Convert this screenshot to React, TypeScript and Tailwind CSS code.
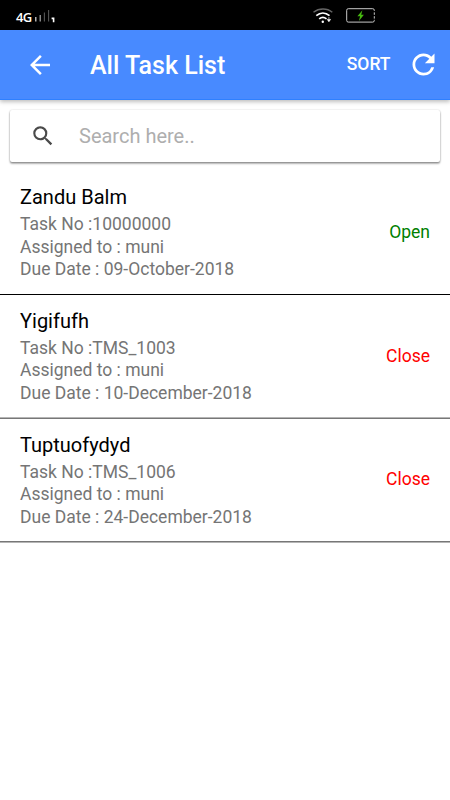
import { MdArrowBack, MdRefresh, MdSearch } from "react-icons/md";

type Task = {
  name: string;
  taskNo: string;
  assignedTo: string;
  dueDate: string;
  status: "Open" | "Close";
};

const tasks: Task[] = [
  { name: "Zandu Balm", taskNo: "10000000", assignedTo: "muni", dueDate: "09-October-2018", status: "Open" },
  { name: "Yigifufh", taskNo: "TMS_1003", assignedTo: "muni", dueDate: "10-December-2018", status: "Close" },
  { name: "Tuptuofydyd", taskNo: "TMS_1006", assignedTo: "muni", dueDate: "24-December-2018", status: "Close" },
];

function StatusBar() {
  return (
    <div className="flex h-[30px] items-center bg-black text-white">
      <span className="ml-4 mt-[4px] w-[18px] font-['Open_Sans',sans-serif] text-[13px] leading-none font-semibold tracking-[-0.7px]">
        4G
      </span>
      <svg width="22" height="16" viewBox="0 0 22 16" className="mt-[2px]">
        <path d="M1.8 9v4.5" stroke="#ddd" strokeWidth="1.2" />
        <path d="M6.2 7v6.5" stroke="#aaa" strokeWidth="1.2" />
        <path d="M10.4 4.5v9" stroke="#555" strokeWidth="1.1" />
        <path d="M14.6 2v11.5" stroke="#555" strokeWidth="1.1" />
        <path d="M17.6 10.4h2v3.8" fill="none" stroke="#fff" strokeWidth="1.6" />
      </svg>
      <svg width="20" height="16" viewBox="0 0 20 16" fill="none" className="mt-px ml-auto">
        <path d="M.5 4.3C6-.1 14-.1 19.3 4.3" stroke="#666" strokeWidth="1.4" />
        <path d="M3.3 7.6c4-3.3 9.2-3.3 13.2 0" stroke="#fff" strokeWidth="1.7" />
        <path d="M6.2 10.9c2.3-2 5-2 7.3 0" stroke="#fff" strokeWidth="1.7" />
        <circle cx="9.8" cy="13.7" r="1.2" fill="#fff" />
        <path d="M15.9 9v2.4M14.2 11.4h3.4l-1.7 2.4z" fill="#fff" stroke="#fff" strokeWidth=".6" />
      </svg>
      <svg width="29" height="15" viewBox="0 0 29 15" fill="none" className="mr-[75px] ml-[13px]">
        <path d="M28.3 3V2.3A1.6 1.6 0 0 0 26.7.7H2.3A1.6 1.6 0 0 0 .7 2.3v10.2a1.6 1.6 0 0 0 1.6 1.6h24.4a1.6 1.6 0 0 0 1.6-1.6v-.7" stroke="#c8c8c8" />
        <path d="M28.3 4.4v6.4" stroke="#c8c8c8" strokeDasharray="2.4 1.4" />
        <path d="M16.4 2.3l-5 6h2.7l-1.2 4.6 5-6.2h-2.7z" fill="#46b910" />
      </svg>
    </div>
  );
}

function TaskRow({ task }: { task: Task }) {
  return (
    <li className="flex h-[123.75px] items-center justify-between border-b border-[#777] px-5 pt-px shadow-[inset_0_-1px_0_#b5b5b5] first:border-black first:shadow-none last:shadow-[0_1px_0_#b5b5b5]">
      <div className="text-[17.5px] leading-[22.5px] text-[#757575]">
        <h2 className="mb-[3px] text-[20px] leading-[25px] text-black">{task.name}</h2>
        <p>Task No :{task.taskNo}</p>
        <p>Assigned to : {task.assignedTo}</p>
        <p>Due Date : {task.dueDate}</p>
      </div>
      <span className={`mb-[2px] text-[17.5px] ${task.status === "Open" ? "text-[#008000]" : "text-[#ff0000]"}`}>
        {task.status}
      </span>
    </li>
  );
}

export default function App() {
  return (
    <div className="h-[800px] w-full overflow-hidden bg-white font-[Roboto,sans-serif]">
      <StatusBar />
      <header className="flex h-[70px] items-center border-b border-[#2f80ff] bg-[#488aff] text-white shadow-[0_2px_4px_rgba(0,0,0,0.25)]">
        <button className="ml-[25px]" aria-label="Back">
          <MdArrowBack size={30} />
        </button>
        <h1 className="mt-[2px] ml-[35px] text-[25px] leading-none font-medium">All Task List</h1>
        <button className="ml-auto text-[17.5px] leading-none font-medium">SORT</button>
        <button className="mr-[10.5px] ml-4" aria-label="Refresh">
          <MdRefresh size={33} />
        </button>
      </header>

      <div className="mx-[10px] mt-[10px] flex h-[52px] items-center rounded-[2px] bg-white shadow-[0_2px_2px_0_rgba(0,0,0,0.22),0_1px_2px_0_rgba(0,0,0,0.3),0_0_2px_0_rgba(0,0,0,0.12)]">
        <MdSearch size={26} className="ml-5 text-[#4a4a4a]" />
        <input
          type="text"
          placeholder="Search here.."
          className="ml-[23px] flex-1 bg-transparent text-[20px] outline-none placeholder:text-[#aeaeae]"
        />
      </div>

      <ul className="mt-[9px]">
        {tasks.map((task) => (
          <TaskRow key={task.taskNo} task={task} />
        ))}
      </ul>
    </div>
  );
}
